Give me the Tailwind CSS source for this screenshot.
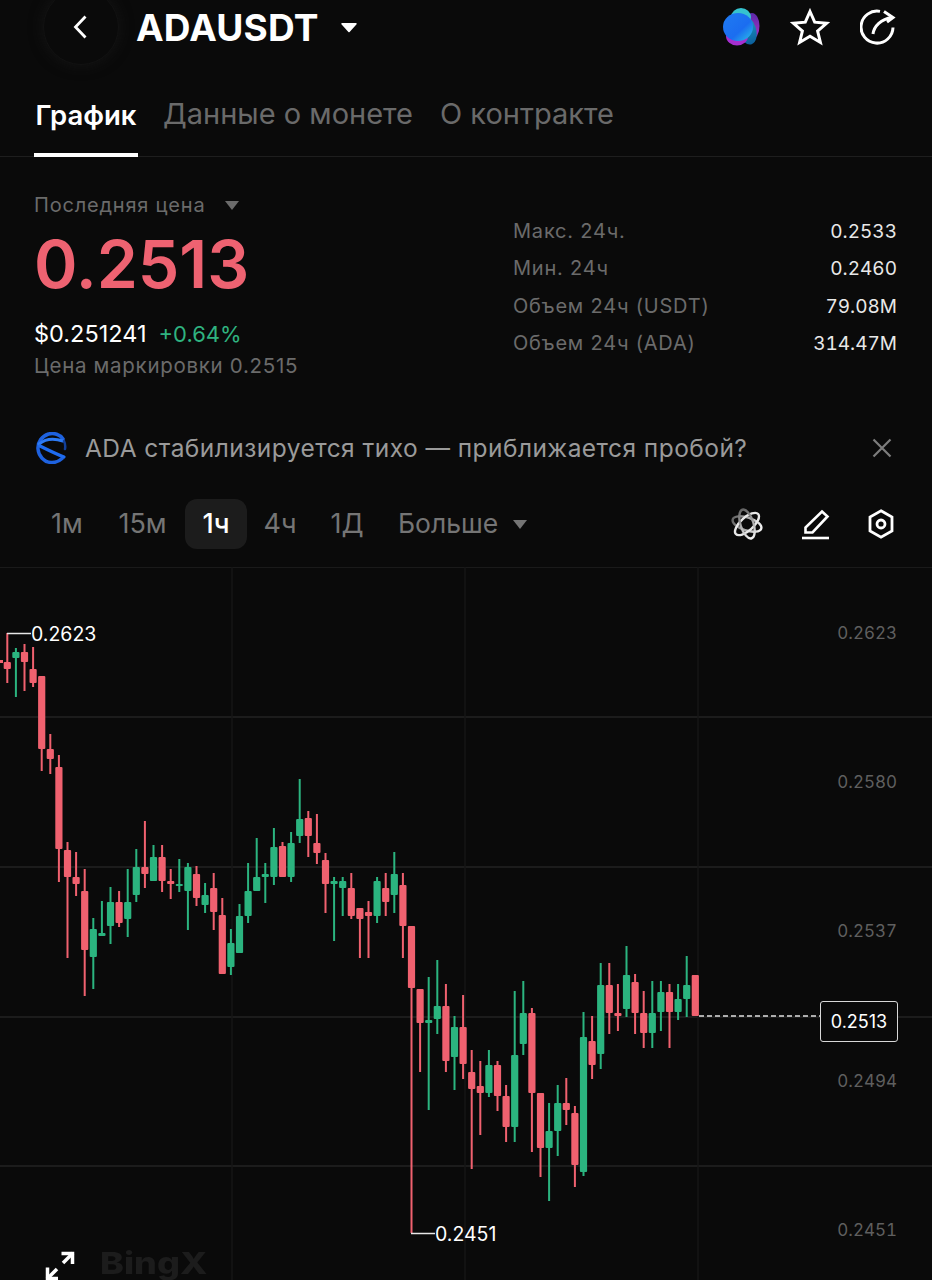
<!DOCTYPE html>
<html lang="ru">
<head>
    <meta charset="UTF-8">
    <meta name="viewport" content="width=device-width, initial-scale=1.0">
    <title>ADAUSDT</title>
    <script src="https://cdn.jsdelivr.net/npm/@tailwindcss/browser@4"></script>
</head>
<body class="bg-[#0a0a0a] [font-family:Inter,'Noto_Sans',sans-serif] text-white w-[932px] h-[1280px] overflow-hidden">

    <!-- Header -->
    <div class="h-[57px] pb-[3px] flex items-center pl-[43px] pr-[36px]">
        <div class="w-[76px] h-[76px] rounded-full border border-[#121212] shadow-[0_0_14px_#151515] flex items-center justify-center shrink-0">
            <svg class="w-[20px] h-[26px]" viewBox="0 0 20 26" fill="none" stroke="#fff" stroke-width="2.8"><path d="M14.5 2.5 4.5 13l10 10.500"/></svg>
        </div>
        <div class="ml-[17px] text-[37px] font-bold leading-none tracking-[0.2px]">ADAUSDT</div>
        <svg class="ml-[22px] w-[16px] h-[11px]" viewBox="0 0 16 11" fill="#fff"><path d="M1 1h14a.8.8 0 0 1 .6 1.300L8.600 10a.8.8 0 0 1-1.200 0L.4 2.300A.8.8 0 0 1 1 1z"/></svg>

        <div class="ml-auto flex items-center gap-[30px]">
            <!-- assistant blob -->
            <svg class="w-[38px] h-[40px] blur-[0.6px]" viewBox="0 0 38 40">
                <defs>
                    <linearGradient id="blobA" x1="0" y1="0" x2="1" y2="1"><stop offset="0" stop-color="#1f7bf2"/><stop offset="0.6" stop-color="#1b6df0"/><stop offset="1" stop-color="#2bc4e8"/></linearGradient>
                    <linearGradient id="blobB" x1="0" y1="0" x2="0" y2="1"><stop offset="0" stop-color="#1fa6c8"/><stop offset="1" stop-color="#0c5f9c"/></linearGradient>
                    <linearGradient id="blobC" x1="0" y1="0" x2="0" y2="1"><stop offset="0" stop-color="#5a2aa8"/><stop offset="1" stop-color="#b02fc9"/></linearGradient>
                </defs>
                <ellipse cx="30" cy="19" rx="7.500" ry="13" fill="url(#blobC)"/>
                <ellipse cx="25" cy="23" rx="9" ry="15" fill="url(#blobB)" transform="rotate(-18 25 23)"/>
                <ellipse cx="19" cy="10" rx="10" ry="9" fill="#35c3cf"/>
                <ellipse cx="15" cy="29" rx="11" ry="9.500" fill="#a72fd0"/>
                <ellipse cx="16" cy="20" rx="15" ry="14" fill="url(#blobA)"/>
            </svg>
            <svg class="w-[40px] h-[38px]" viewBox="0 0 40 38" fill="none" stroke="#fff" stroke-width="3" stroke-linejoin="miter"><path d="M20 3.500 24.700 14.200 36.500 15.300 27.600 23 30.400 34.500 20 28.300 9.600 34.500 12.400 23 3.500 15.300 15.300 14.200z"/></svg>
            <svg class="w-[36px] h-[38px]" viewBox="0 0 36 38" fill="none" stroke="#fff" stroke-width="3"><path d="M20 3.400A16 16 0 1 0 33 19.500"/><path d="M13 26c1-8 8-15 19-16.500"/><path d="M24 3.500 33 9.500 27 14"/></svg>
        </div>
    </div>

    <!-- Tabs -->
    <div class="h-[100px] border-b border-[#1e1e1e] px-[34px] flex items-end gap-[25px] text-[29px]">
        <div class="h-[71px] pt-[11px] border-b-[4px] border-white font-semibold text-[27.500px] w-[104px] text-center mb-[-1px] leading-[36px]">График</div>
        <div class="h-[71px] pt-[11px] text-[#6a6a6a] leading-[36px]">Данные о монете</div>
        <div class="h-[71px] pt-[11px] ml-[2px] text-[#6a6a6a] leading-[36px]">О контракте</div>
    </div>

    <!-- Price block -->
    <div class="h-[265px] px-[35px] flex justify-between">
        <div class="pt-[35px]">
            <div class="flex items-center text-[20px] leading-[26px] tracking-[0.8px] text-[#6b6b6b] -ml-[1px]">
                Последняя цена
                <svg class="ml-[20px] w-[14px] h-[9px]" viewBox="0 0 14 9" fill="#6b6b6b"><path d="M0 0h14L7 9z"/></svg>
            </div>
            <div class="text-[66px] leading-[72px] mt-[10px] font-semibold text-[#ee6271] -ml-[1px]">0.2513</div>
            <div class="flex items-center mt-[20px] leading-[28px] -ml-[1px]">
                <span class="text-[23.500px]">$0.251241</span>
                <span class="ml-[12px] text-[22px] text-[#2fb380]">+0.64%</span>
            </div>
            <div class="text-[20.500px] leading-[26px] mt-[5px] tracking-[0.7px] text-[#6b6b6b] -ml-[1px]">Цена маркировки 0.2515</div>
        </div>
        <div class="w-[384px] pt-[56px] text-[20px] leading-[37.300px]">
            <div class="flex justify-between"><span class="text-[#6b6b6b] tracking-[0.8px]">Макс. 24ч.</span><span class="text-[#e8e8e8] text-[19px] tabular-nums">0.2533</span></div>
            <div class="flex justify-between"><span class="text-[#6b6b6b] tracking-[0.8px]">Мин. 24ч</span><span class="text-[#e8e8e8] text-[19px] tabular-nums">0.2460</span></div>
            <div class="flex justify-between"><span class="text-[#6b6b6b] tracking-[0.8px]">Объем 24ч (USDT)</span><span class="text-[#e8e8e8] text-[19px] tabular-nums">79.08M</span></div>
            <div class="flex justify-between"><span class="text-[#6b6b6b] tracking-[0.8px]">Объем 24ч (ADA)</span><span class="text-[#e8e8e8] text-[19px] tabular-nums">314.47M</span></div>
        </div>
    </div>

    <!-- News line -->
    <div class="h-[54px] pb-[2px] pl-[36px] pr-[40px] flex items-center">
        <svg class="w-[31px] h-[32px] shrink-0" viewBox="0 0 31 32" fill="none" stroke-linecap="round">
            <path d="M27 7C24 2.500 18 .5 12.500 2 6 4 1.500 10 2 17c.5 7 6 13 13 13.500 4 .3 8-1.200 11-4" stroke="#1e62e0" stroke-width="3.500"/>
            <path d="M3 12c6-5 15-6 24-3" stroke="#2d7bf5" stroke-width="3"/>
            <path d="M4 14c6 3 16 8 24 11" stroke="#1f6cf0" stroke-width="3.200"/>
            <path d="M28 9c1 2 1.500 5 1 8" stroke="#123f98" stroke-width="2.500"/>
        </svg>
        <div class="ml-[18px] text-[24.500px] leading-none text-[#9a9a9a] tracking-[0.45px]">ADA стабилизируется тихо — приближается пробой?</div>
        <svg class="ml-auto w-[20px] h-[20px]" viewBox="0 0 20 20" stroke="#7d7d7d" stroke-width="2.200"><path d="M1.500 1.500l17 17M18.500 1.500l-17 17"/></svg>
    </div>

    <!-- Timeframes -->
    <div class="h-[91px] pl-[34px] pr-[38px] pt-[23px] flex items-start text-[27px] text-[#757575]">
        <div class="h-[50px] w-[66px] flex items-center justify-center">1м</div>
        <div class="h-[50px] w-[85px] flex items-center justify-center">15м</div>
        <div class="h-[50px] w-[62px] flex items-center justify-center rounded-xl bg-[#1c1c1c] text-white font-medium">1ч</div>
        <div class="h-[50px] w-[66px] flex items-center justify-center">4ч</div>
        <div class="h-[50px] w-[68px] flex items-center justify-center">1Д</div>
        <div class="h-[50px] flex items-center ml-[17px] text-[26.500px]">Больше
            <svg class="ml-[15px] w-[14px] h-[9px]" viewBox="0 0 14 9" fill="#757575"><path d="M0 0h14L7 9z"/></svg>
        </div>
        <div class="ml-auto h-[50px] flex items-center gap-[37px]">
            <svg class="w-[34px] h-[34px]" viewBox="0 0 34 34" fill="none" stroke-width="2.400">
                <defs><linearGradient id="atomFade" x1="0" y1="0" x2="1" y2="0"><stop offset="0" stop-color="#666"/><stop offset="1" stop-color="#f2f2f2"/></linearGradient></defs>
                <ellipse cx="17" cy="17" rx="15" ry="6.500" stroke="url(#atomFade)" transform="rotate(18 17 17)"/>
                <ellipse cx="17" cy="17" rx="15" ry="6.500" stroke="#e8e8e8" transform="rotate(-42 17 17)"/>
                <ellipse cx="17" cy="17" rx="15" ry="6.500" stroke="url(#atomFade)" transform="rotate(72 17 17)"/>
            </svg>
            <svg class="w-[30px] h-[32px]" viewBox="0 0 30 32" fill="none" stroke="#fff" stroke-width="2.600"><path d="M21 3.500 26.500 8.500 11.500 24.500 4.500 24.500 4.500 19.500z"/><path d="M1 30h27"/></svg>
            <svg class="w-[26px] h-[30px]" viewBox="0 0 26 30" fill="none" stroke="#fff" stroke-width="2.800"><path d="M13 1.800 24 8.100V21.900L13 28.200 2 21.900V8.100z"/><circle cx="13" cy="15" r="4"/></svg>
        </div>
    </div>

    <!-- Chart -->
    <div class="relative h-[713px] border-t border-[#1a1a1a]">
        <svg id="chart" class="absolute left-0 top-[-1px] w-[932px] h-[713px]" viewBox="0 567 932 713"></svg>

        <!-- axis -->
        <div class="absolute right-[35px] top-[-9px] text-[17px] text-[#5f5f5f] text-right tabular-nums">
            <div class="h-[149.250px] flex items-center justify-end">0.2623</div>
            <div class="h-[149.250px] flex items-center justify-end">0.2580</div>
            <div class="h-[149.250px] flex items-center justify-end">0.2537</div>
            <div class="h-[149.250px] flex items-center justify-end">0.2494</div>
            <div class="h-[149.250px] flex items-center justify-end">0.2451</div>
        </div>

        <!-- extremes -->
        <div class="absolute left-[31px] top-[53px] text-[19.500px] leading-[26px] text-white">0.2623</div>
        <div class="absolute left-[435px] top-[653px] text-[19.500px] leading-[26px] text-white">0.2451</div>

        <!-- last price tag -->
        <div class="absolute left-[820px] top-[433px] w-[78px] h-[41px] border border-[#d8d8d8] rounded-[3px] bg-[#0a0a0a] flex items-center justify-center text-[18px]">0.2513</div>

        <!-- fullscreen and watermark -->
        <svg class="absolute left-[44px] top-[682px] w-[32px] h-[32px]" viewBox="0 0 32 32" fill="none" stroke="#fff" stroke-width="3.500"><path d="M29 3 19 13"/><path d="M17.500 3.500H28.500V14"/><path d="M3 29 13 19"/><path d="M3.500 17.500V28.500H14"/></svg>
        <div class="absolute left-[100px] top-[676px] text-[30px] leading-[38px] font-extrabold text-[#1c1c1c] origin-left scale-x-120">BingX</div>
    </div>

    <script>
        // [colour, wick top, body top, body bottom, wick bottom], read off the chart
        const candles = [
            ['r',633,662,669,683],['g',648,652,658,697],['r',644,652,662,691],['r',647,669,683,687],['r',676,676,749,771],
            ['r',734,749,759,774],['r',755,767,849,882],['r',842,850,877,958],['r',852,877,884,896],['r',869,891,950,996],
            ['g',918,929,957,989],['g',901,933,936,936],['g',887,902,926,944],['r',891,902,923,927],['g',869,902,919,937],
            ['g',849,867,895,902],['r',821,867,874,888],['g',845,857,881,881],['r',845,857,881,892],['r',869,881,884,899],
            ['g',859,884,885,892],['g',863,867,891,930],['r',866,874,898,906],['g',883,895,905,913],['r',873,888,912,930],
            ['r',898,915,974,974],['g',929,943,967,975],['g',904,916,953,953],['g',863,891,916,923],['g',838,877,891,891],
            ['g',863,874,877,903],['g',828,847,877,885],['r',842,846,877,877],['g',832,843,877,882],['g',779,819,836,843],
            ['r',811,818,836,857],['r',814,843,853,864],['r',853,860,884,913],['g',877,881,884,941],['g',877,881,888,916],
            ['r',873,888,916,919],['r',908,908,919,958],['r',901,912,916,958],['g',877,881,916,923],['r',873,888,902,916],
            ['g',852,874,895,913],['r',873,885,926,958],['r',926,926,988,1233],['r',989,989,1023,1072],['g',977,1020,1023,1110],
            ['g',960,1006,1019,1034],['r',984,1006,1061,1072],['g',1016,1027,1057,1090],['r',995,1027,1064,1079],['r',1050,1072,1089,1169],
            ['r',1061,1086,1093,1135],['g',1050,1065,1093,1097],['r',1061,1065,1096,1111],['r',1085,1096,1127,1142],['g',991,1055,1127,1142],
            ['g',981,1013,1044,1055],['r',1008,1013,1093,1152],['r',1093,1093,1148,1177],['g',1103,1131,1148,1201],['g',1085,1103,1131,1156],
            ['r',1078,1103,1110,1125],['r',1106,1113,1165,1187],['g',1012,1037,1172,1176],['r',1016,1041,1065,1079],['g',963,985,1054,1069],
            ['r',963,985,1013,1034],['r',984,1013,1016,1031],['g',946,975,1009,1017],['r',974,982,1013,1034],['r',991,1013,1033,1048],
            ['g',981,1013,1033,1048],['g',981,992,1012,1031],['r',984,992,1012,1048],['g',984,999,1012,1020],['g',956,985,999,1017],
            ['r',975,975,1016,1016]
        ];
        const colours = { r: '#f0616f', g: '#2bb47f' };
        let out = '';

        // grid
        [717, 867, 1017, 1166].forEach(y => {
            out += `<line x1="0" x2="932" y1="${y}" y2="${y}" stroke="#1c1c1c" stroke-width="2"/>`;
        });
        [232, 465, 698].forEach(x => {
            out += `<line x1="${x}" x2="${x}" y1="567" y2="1280" stroke="#161616" stroke-width="1.500"/>`;
        });

        // one stray candle cut off by the left edge
        out += `<rect x="-4" y="660" width="7" height="3" fill="${colours.r}"/>`;

        candles.forEach((c, i) => {
            const x = 7.3 + i * 8.6;
            const fill = colours[c[0]];
            out += `<rect x="${x - 1}" y="${c[1]}" width="2" height="${c[4] - c[1]}" fill="${fill}"/>`;
            out += `<rect x="${x - 3.6}" y="${c[2]}" width="7.200" height="${Math.max(c[3] - c[2], 2)}" rx="1" fill="${fill}"/>`;
        });

        // leader lines to the high, low and last price
        out += `<path d="M7 633.500H31M411 1233.500H435" stroke="#e8e8e8" stroke-width="1.500" fill="none"/>`;
        out += `<line x1="699" x2="820" y1="1016" y2="1016" stroke="#e0e0e0" stroke-width="1.500" stroke-dasharray="5 3"/>`;

        document.getElementById('chart').innerHTML = out;
    </script>
</body>
</html>
